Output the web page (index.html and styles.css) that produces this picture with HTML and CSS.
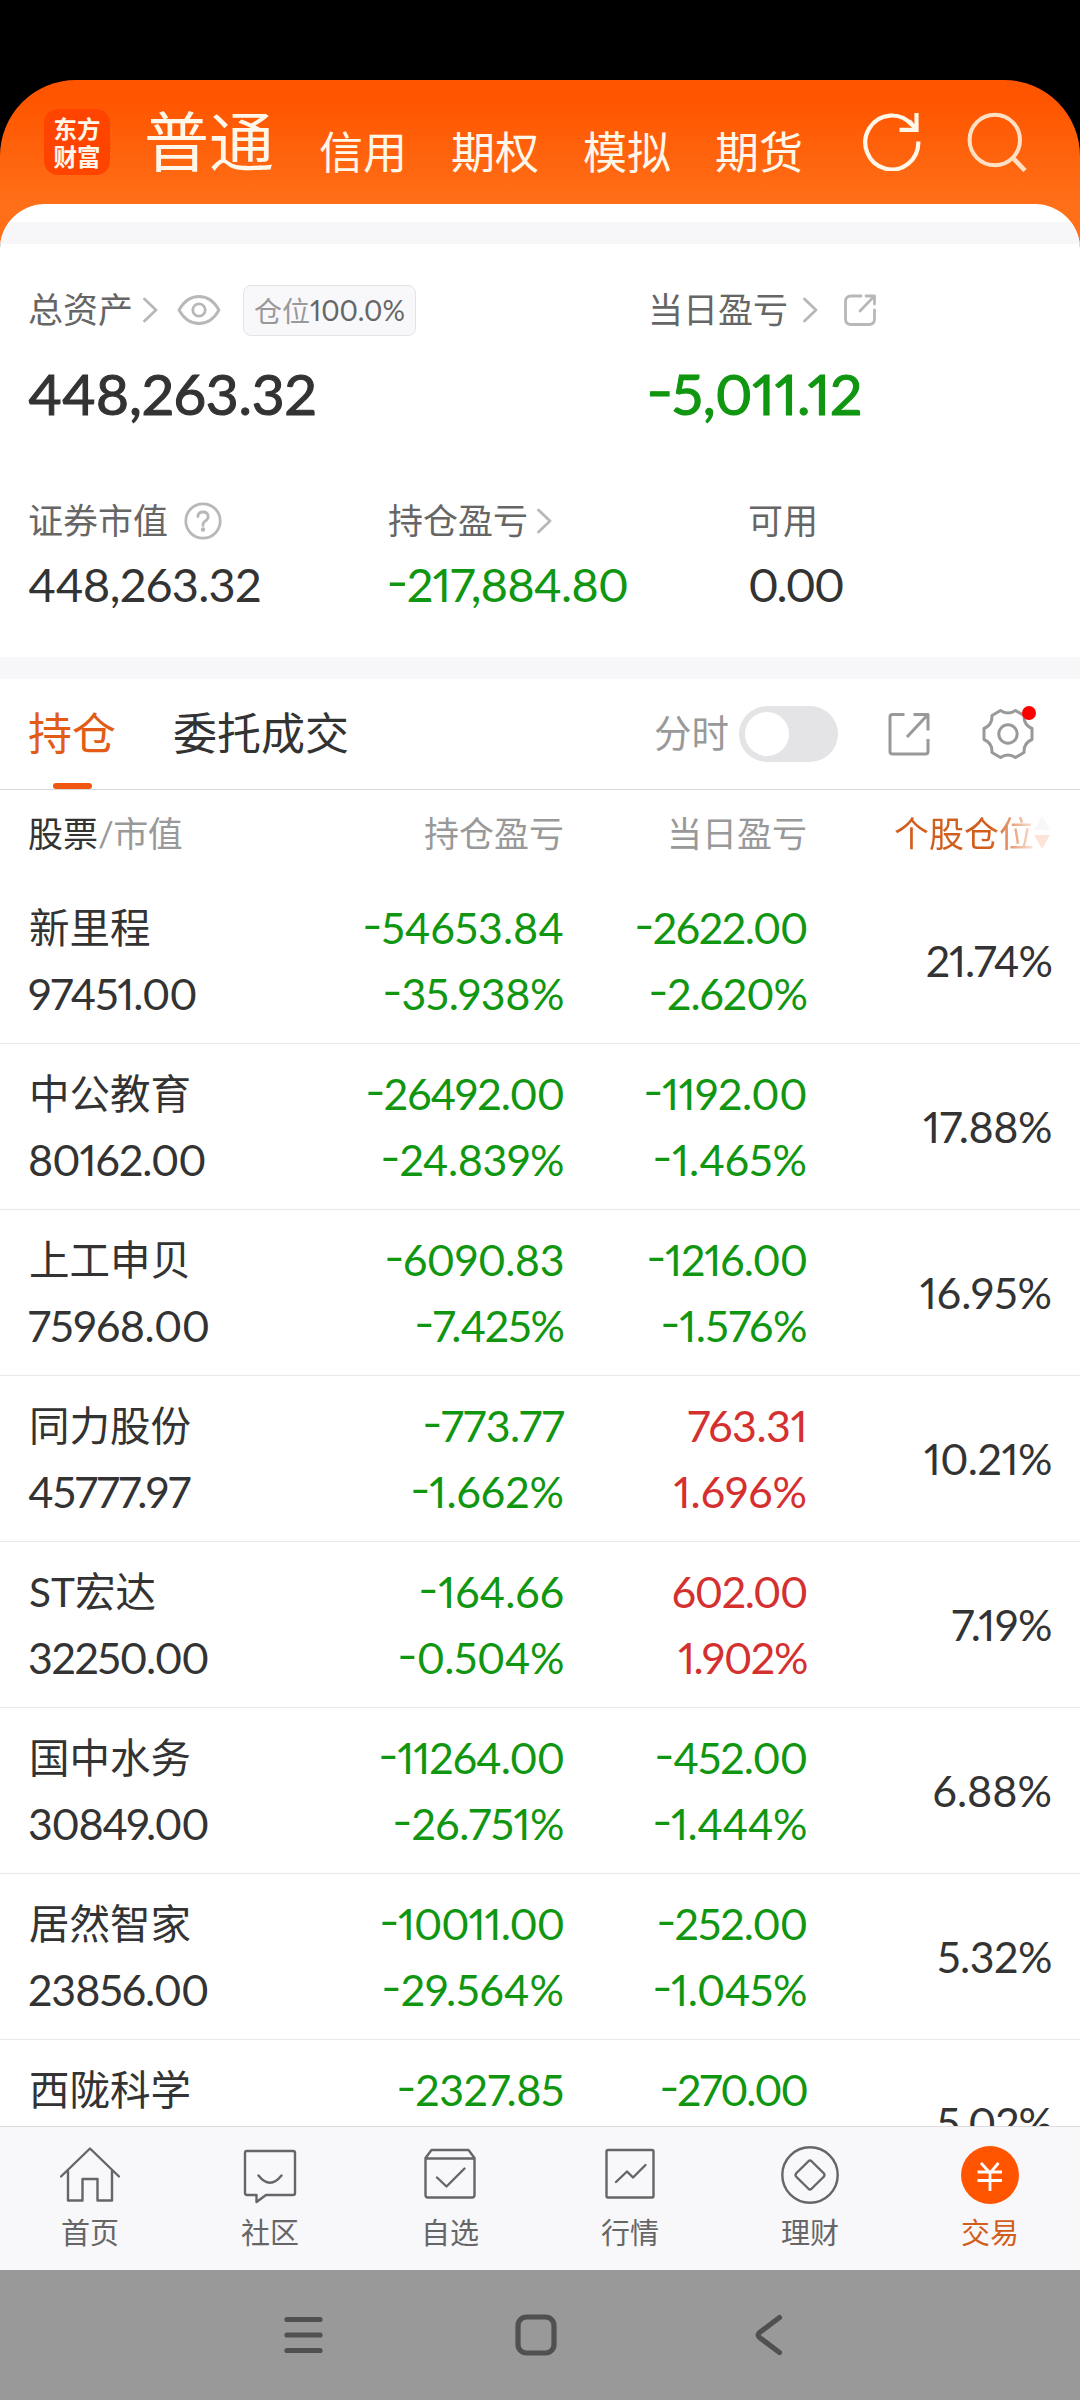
FILE: index.html
```html
<!DOCTYPE html>
<html lang="zh-CN">
<head>
<meta charset="utf-8">
<title>交易 - 持仓</title>
<link rel="stylesheet" href="styles.css">
</head>
<body>
<div class="phone">
  <header class="top">
    <div class="logo"><span>东方</span><span>财富</span></div>
    <nav class="accounts">
      <a class="current">普通</a><a>信用</a><a>期权</a><a>模拟</a><a>期货</a>
    </nav>
    <svg class="refresh" width="60" height="60" viewBox="0 0 60 60" fill="none" stroke="#fff7ea" stroke-width="4.2"><path d="M56.3 30.500A26.500 27 0 1 1 50 14"/><path d="M37.500 18.800H54.500V2"/><path d="M54 18 47 10"/></svg>
    <svg class="search" width="60" height="60" viewBox="0 0 60 60" fill="none" stroke="#ffe0c4" stroke-width="4"><circle cx="27.800" cy="28" r="25.200"/><path d="M45 45 58 58.500" stroke-width="4.600"/></svg>
  </header>

  <main class="sheet">
    <div class="strip"></div>
    <section class="summary">
      <div class="totals">
        <div>
          <div class="label"><span>总资产</span><svg class="chev c1" width="15" height="26" viewBox="0 0 15 26"><path d="M1.500 2 13 13 1.500 24"/></svg><svg class="eye" width="44" height="32" viewBox="0 0 44 32"><path d="M2 16C12-2 32-2 42 16 32 34 12 34 2 16Z"/><circle cx="22" cy="16" r="6.200"/></svg><div class="badge">仓位<b>100.0%</b></div></div>
          <div class="big">448,263.32</div>
        </div>
        <div>
          <div class="label"><span>当日盈亏</span><svg class="chev c2" width="15" height="26" viewBox="0 0 15 26"><path d="M1.500 2 13 13 1.500 24"/></svg><svg class="share" width="32" height="32" viewBox="0 0 32 32"><path d="M17 2H7Q1.500 2 1.500 7.500V25Q1.500 30.500 7 30.500H25Q30.500 30.500 30.500 25V16M22 2H30.500V10M30 2.500 16 17"/></svg></div>
          <div class="big down"><i>-</i>5,011.12</div>
        </div>
      </div>
      <div class="details">
        <div>
          <div class="label"><span>证券市值</span><svg class="help" width="38" height="38" viewBox="0 0 38 38"><circle cx="19" cy="19" r="17.200"/><path d="M13.800 14.500Q14.300 10 19 10T24.200 14.500Q24.200 17 21.500 18.800T19 22.500V23.500"/><circle class="dot" cx="19" cy="27.500" r="2.200"/></svg></div>
          <div class="mid">448,263.32</div>
        </div>
        <div>
          <div class="label"><span>持仓盈亏</span><svg class="chev c3" width="15" height="26" viewBox="0 0 15 26"><path d="M1.500 2 13 13 1.500 24"/></svg></div>
          <div class="mid down"><i>-</i>217,884.80</div>
        </div>
        <div>
          <div class="label"><span>可用</span></div>
          <div class="mid zero">0.00</div>
        </div>
      </div>
    </section>

    <div class="tabs">
      <a class="tab active">持仓</a><a class="tab">委托成交</a>
      <span class="mode">分时</span><span class="toggle"><span></span></span>
      <svg class="open" width="42" height="44" viewBox="0 0 42 44"><path d="M16.500 2.500H4.500Q2 2.500 2 5V39.500Q2 42 4.500 42H37.500Q40 42 40 39.500V27M25.500 2.500H40V18.500M39.500 3 19 25"/></svg>
      <span class="gear"><svg width="52" height="52" viewBox="0 0 52 52"><path d="M18.500 2.500Q26 7.500 33.500 2.500L42 7.500Q41.500 17 50 20.500V31.500Q41.500 35 42 44.500L33.500 49.500Q26 44.500 18.500 49.500L10 44.500Q10.500 35 2 31.500V20.500Q10.500 17 10 7.500Z"/><circle cx="26" cy="26" r="9.200"/></svg><span class="alert"></span></span>
    </div>

    <div class="table">
      <div class="head"><span class="dark">股票<em>/市值</em></span><span>持仓盈亏</span><span>当日盈亏</span><span class="sort">个股仓位<svg width="16" height="34" viewBox="0 0 16 34"><path d="M0 14 8 0 16 14Z" fill="#f7f7f7"/><path d="M0 19H16L8 33Z" fill="#fde3d8"/></svg></span></div>
      <div class="row"><div class="stock"><p>新里程</p><p class="t2">97451.00</p></div><div class="down"><p><i>-</i>54653.84</p><p class="t1"><i>-</i>35.938%</p></div><div class="down"><p class="t3"><i>-</i>2622.00</p><p class="t2"><i>-</i>2.620%</p></div><div class="share-pct t2">21.74%</div></div>
      <div class="row"><div class="stock"><p>中公教育</p><p class="t2">80162.00</p></div><div class="down"><p class="t2"><i>-</i>26492.00</p><p class="t1"><i>-</i>24.839%</p></div><div class="down"><p class="t1"><i>-</i>1192.00</p><p><i>-</i>1.465%</p></div><div class="share-pct t1">17.88%</div></div>
      <div class="row"><div class="stock"><p>上工申贝</p><p class="t1">75968.00</p></div><div class="down"><p class="t1"><i>-</i>6090.83</p><p class="t2"><i>-</i>7.425%</p></div><div class="down"><p class="t2"><i>-</i>1216.00</p><p class="t1"><i>-</i>1.576%</p></div><div class="share-pct">16.95%</div></div>
      <div class="row"><div class="stock"><p>同力股份</p><p class="t2">45777.97</p></div><div class="down"><p class="t1"><i>-</i>773.77</p><p><i>-</i>1.662%</p></div><div class="up"><p class="t1">763.31</p><p>1.696%</p></div><div class="share-pct t1">10.21%</div></div>
      <div class="row"><div class="stock"><p>ST宏达</p><p class="t3">32250.00</p></div><div class="down"><p><i>-</i>164.66</p><p class="t1"><i>-</i>0.504%</p></div><div class="up"><p class="t3">602.00</p><p class="t3">1.902%</p></div><div class="share-pct t1">7.19%</div></div>
      <div class="row"><div class="stock"><p>国中水务</p><p class="t3">30849.00</p></div><div class="down"><p class="t2"><i>-</i>11264.00</p><p class="t1"><i>-</i>26.751%</p></div><div class="down"><p class="t2"><i>-</i>452.00</p><p class="t1"><i>-</i>1.444%</p></div><div class="share-pct">6.88%</div></div>
      <div class="row"><div class="stock"><p>居然智家</p><p class="t2">23856.00</p></div><div class="down"><p class="t2"><i>-</i>10011.00</p><p><i>-</i>29.564%</p></div><div class="down"><p class="t2"><i>-</i>252.00</p><p class="t1"><i>-</i>1.045%</p></div><div class="share-pct t1">5.32%</div></div>
      <div class="row"><div class="stock"><p>西陇科学</p></div><div class="down"><p class="t1"><i>-</i>2327.85</p></div><div class="down"><p class="t4"><i>-</i>270.00</p></div><div class="share-pct t2">5.02%</div></div>
    </div>
  </main>

  <nav class="bottom">
    <a><svg width="60" height="60" viewBox="0 0 60 60"><path d="M1 30.500 30 2.500 59 30.500M8 25V54.500H22.500V33H37.500V54.500H52V25"/></svg>首页</a>
    <a><svg width="60" height="60" viewBox="0 0 60 60"><path d="M6.500 5H53Q55 5 55 7V47Q55 49 53 49H26L16.500 56V49H7Q5 49 5 47V7Q5 5 6.500 5ZM18.500 29.500Q30 44 41.500 29.500"/></svg>社区</a>
    <a><svg width="60" height="60" viewBox="0 0 60 60"><path d="M5.500 12 11.500 4H48.500L54.500 12V49Q54.500 51.500 52 51.500H8Q5.500 51.500 5.500 49ZM5.500 12.500H54.500M17 31.500 26.500 40.500 44.500 22.500"/></svg>自选</a>
    <a><svg width="60" height="60" viewBox="0 0 60 60"><rect x="6.500" y="4" width="47" height="47.500" rx="1.500"/><path d="M16 36 27 25.500 33 31.500 45.500 19"/></svg>行情</a>
    <a><svg width="60" height="60" viewBox="0 0 60 60"><circle cx="30" cy="29" r="27.700"/><path d="M28.700 15 16 27.500Q15 29 16 30.500L28.700 43Q30 44 31.300 43L44 30.500Q45 29 44 27.500L31.300 15Q30 14 28.700 15Z"/></svg>理财</a>
    <a class="on"><svg width="60" height="60" viewBox="0 0 60 60"><circle cx="30" cy="29" r="29"/><path d="M21 17 30 27 38.500 17M17.500 26H42M17.500 34.500H42M30 26V45"/></svg>交易</a>
  </nav>

  <footer class="system">
    <svg width="40" height="42" viewBox="0 0 40 42"><path d="M3 5.500H36M3 21H36M3 36.500H36"/></svg>
    <svg width="42" height="42" viewBox="0 0 42 42"><rect x="3" y="3" width="36" height="36" rx="8.500"/></svg>
    <svg width="40" height="42" viewBox="0 0 40 42"><path d="M31.500 3.500 11.500 18.500Q9 21 11.500 23.500L31.500 38.500"/></svg>
  </footer>
</div>
</body>
</html>
```
FILE: styles.css
```css
* { box-sizing: border-box; }
body { margin: 0; background: #000; color: #333; font-family: Lato, "Noto Sans CJK SC", sans-serif; }
p { margin: 0; }
i, em, b { font-style: normal; font-weight: inherit; }
svg { display: block; flex: none; }

.phone { width: 1080px; height: 2400px; overflow: hidden; display: flex; flex-direction: column; padding-top: 80px; }

.top { height: 164px; flex: none; display: flex; align-items: flex-start; padding: 29px 48px 0 44px; border-radius: 76px 76px 0 0; background: linear-gradient(#ff5500 12%, #ff6f18 75%); color: #fff7ea; }
.logo { width: 66px; height: 66px; border-radius: 14px; background: #ff4400; display: flex; flex-direction: column; align-items: center; justify-content: center; font: bold 23.500px/28px "Noto Sans CJK SC", sans-serif; color: #fff7ea; }
.accounts { display: flex; align-items: flex-start; gap: 44px; margin-left: 34px; font-size: 44px; line-height: 88px; white-space: nowrap; }
.accounts a { width: 88px; margin-top: -1px; }
.accounts .current { width: 131px; font-size: 65px; margin-top: -12px; }
.refresh { margin: 2px 0 0 59px; }
.search { margin: 3px 0 0 45px; }

.sheet { flex: 1; min-height: 0; margin-top: -40px; background: #fff; border-radius: 45px 45px 0 0; overflow: hidden; }
.strip { margin-top: 18px; height: 22px; background: #f7f7fa; }

.summary { height: 435px; padding: 37px 0 0 28px; border-bottom: 22px solid #f7f7fa; }
.totals { display: grid; grid-template-columns: 620px 1fr; }
.details { display: grid; grid-template-columns: 360px 360px 1fr; margin-top: 59px; }
.label { height: 58px; display: flex; align-items: center; font-size: 35px; color: #666; white-space: nowrap; }
.label span { padding-bottom: 5px; }
.label svg { fill: none; stroke: #b8b8b8; stroke-width: 2.8; stroke-linejoin: round; stroke-linecap: round; }
.c1 { margin-left: 10px; }
.c2 { margin-left: 15px; }
.c3 { margin-left: 9px; }
.eye { margin-left: 19px; }
.share { margin-left: 26px; }
.help { margin-left: 16px; }
.label .dot { fill: #b8b8b8; stroke: none; }
.badge { margin-left: 22px; width: 173px; height: 51px; border: 1px solid #e4e4e7; border-radius: 8px; background: #f8f8fb; display: flex; align-items: center; justify-content: center; font-size: 28px; color: #999; }
.badge b { color: #666; }
.big, .mid, .row, .badge b { font-feature-settings: "pnum", "case"; }
.big { font-size: 57px; line-height: 80px; margin-top: 14px; -webkit-text-stroke: 1.1px currentColor; letter-spacing: -0.2px; }
.mid { font-size: 47px; line-height: 66px; margin-top: 1px; letter-spacing: -0.65px; }
.mid.down { letter-spacing: -0.9px; }
.mid.zero { letter-spacing: -2px; }
.down { color: #109610; }
.up { color: #d53030; }
/* wider, slightly raised minus sign */
.down i { display: inline-block; transform: translateY(-2px) scaleX(1.3); transform-origin: left; margin-right: 0.09em; }
.big.down i, .mid.down i { margin-left: -2px; }

.tabs { height: 111px; border-bottom: 1px solid #d8d8d8; display: flex; align-items: center; padding-left: 28px; font-size: 44px; }
.tab { height: 110px; line-height: 108px; margin-right: 57px; }
.tab.active { color: #e25c17; position: relative; }
.tab.active::after { content: ""; position: absolute; left: 25px; bottom: 0; width: 39px; height: 6px; border-radius: 3px; background: #f0560f; }
.mode { margin-left: auto; font-size: 37.500px; line-height: 48px; padding-bottom: 2px; color: #999; }
.toggle { width: 99px; height: 56px; margin: 0 50px 0 10px; border-radius: 28px; background: #e4e4e6; padding: 6px; }
.toggle span { display: block; width: 44px; height: 44px; border-radius: 50%; background: #fff; }
.tabs svg { fill: none; stroke: #999; stroke-width: 3; stroke-linejoin: round; }
.gear { margin: 0 46px 0 52px; position: relative; }
.alert { position: absolute; right: -2px; top: -2px; width: 14px; height: 14px; border-radius: 50%; background: #f00; }

.head, .row { display: grid; grid-template-columns: 301px 235px 243px 245px; padding-left: 28px; text-align: right; }
.head { height: 88px; line-height: 86px; font-size: 35px; color: #999; }
.dark { text-align: left; color: #333; }
.dark em { color: #999; letter-spacing: -0.6px; }
.sort { height: 86px; display: flex; justify-content: flex-end; align-items: center; padding-right: 2px; background: linear-gradient(90deg, #d25e1e 75%, #fff0e8 94%); background-clip: text; -webkit-background-clip: text; color: transparent; }
.row { height: 166px; padding-top: 17px; border-bottom: 1px solid #e8e8e8; font-size: 43px; line-height: 66px; }
.row > .stock { text-align: left; }
.stock p:first-child { font-size: 40.500px; padding-left: 1px; }
.share-pct { line-height: 132px; }
.t1 { letter-spacing: -0.45px; }
.t2 { letter-spacing: -1px; }
.t3 { letter-spacing: -1.35px; }
.t4 { letter-spacing: -1.9px; }

.bottom { height: 144px; flex: none; background: #f8f8fb; border-top: 1px solid #dcdcdf; display: grid; grid-template-columns: repeat(6, 1fr); padding-top: 19px; }
.bottom a { display: flex; flex-direction: column; align-items: center; font-size: 29px; line-height: 40px; gap: 7px; color: #666; }
.bottom svg { fill: none; stroke: #666; stroke-width: 2.400; stroke-linejoin: round; stroke-linecap: round; }
.bottom .on { color: #d25e1e; }
.bottom .on circle { fill: #ff5500; stroke: none; }
.bottom .on path { stroke: #fff; stroke-width: 2.800; stroke-linecap: butt; stroke-linejoin: miter; }

.system { height: 130px; flex: none; background: #999; display: flex; align-items: center; justify-content: center; gap: 191px; padding-right: 9px; }
.system svg { fill: none; stroke: #505050; stroke-width: 5.200; stroke-linecap: round; stroke-linejoin: round; }
```
